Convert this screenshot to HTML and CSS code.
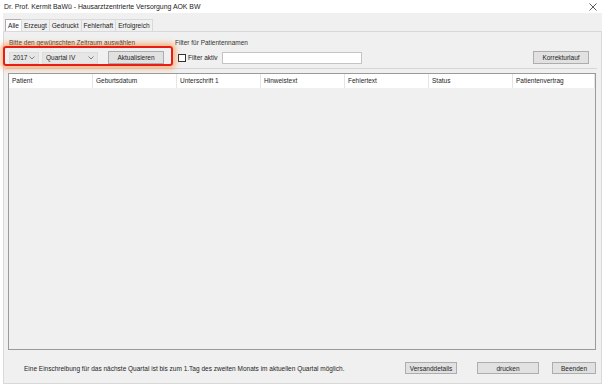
FILE: index.html
```html
<!doctype html>
<html lang="de">
<head>
	<meta charset="UTF-8">
	<title>Hausarztzentrierte Versorgung AOK BW</title>
	<link rel="stylesheet" href="styles.css">
</head>
<body>
	<div class="titlebar">
		<span>Dr. Prof. Kermit BaWü - Hausarztzentrierte Versorgung AOK BW</span>
		<svg class="close" width="8" height="8" viewBox="0 0 8 8"><path d="M0.5 0.5L7.5 7.5M7.5 0.5L0.5 7.5" stroke="#333" stroke-width="0.8"/></svg>
	</div>
	<div class="window">
		<div class="tabs">
			<span class="tab on">Alle</span>
			<span class="tab">Erzeugt</span>
			<span class="tab">Gedruckt</span>
			<span class="tab">Fehlerhaft</span>
			<span class="tab">Erfolgreich</span>
		</div>
		<div class="panel">
			<div class="filters">
				<div class="group">
					<div class="label">Bitte den gewünschten Zeitraum auswählen</div>
					<div class="row">
						<div class="combo year">2017<svg width="6" height="4" viewBox="0 0 6 4"><path d="M0.5 0.5L3 3L5.5 0.5" fill="none" stroke="#666" stroke-width="0.8"/></svg></div>
						<div class="combo quarter">Quartal IV<svg width="6" height="4" viewBox="0 0 6 4"><path d="M0.5 0.5L3 3L5.5 0.5" fill="none" stroke="#666" stroke-width="0.8"/></svg></div>
						<button class="btn refresh">Aktualisieren</button>
					</div>
				</div>
				<div class="group names">
					<div class="label">Filter für Patientennamen</div>
					<div class="row">
						<span class="check"></span>
						<span class="checklabel">Filter aktiv</span>
						<span class="input"></span>
					</div>
				</div>
				<button class="btn korr">Korrekturlauf</button>
			</div>
			<div class="sep"></div>
			<div class="grid">
				<div class="head">
					<span>Patient</span>
					<span>Geburtsdatum</span>
					<span>Unterschrift 1</span>
					<span>Hinweistext</span>
					<span>Fehlertext</span>
					<span>Status</span>
					<span>Patientenvertrag</span>
				</div>
			</div>
			<div class="footer">
				<span class="note">Eine Einschreibung für das nächste Quartal ist bis zum 1.Tag des zweiten Monats im aktuellen Quartal möglich.</span>
				<button class="btn versand">Versanddetails</button>
				<button class="btn drucken">drucken</button>
				<button class="btn beenden">Beenden</button>
			</div>
		</div>
	</div>
	<div class="highlight"></div>
</body>
</html>
```

FILE: styles.css
```css
*{margin:0;padding:0;box-sizing:border-box;}
body{
	background:#fff;
	font-family:"Liberation Sans",Arial,sans-serif;
	font-size:6.5px;
	color:#1e1e1e;
	width:608px;
	height:389px;
	overflow:hidden;
	position:relative;
}
.titlebar{
	height:13px;
	display:flex;
	align-items:center;
	padding:0 0 0 4px;
	font-size:6.9px;
	color:#222;
}
.titlebar .close{margin-left:auto;margin-right:11px;}
.window{
	margin-left:3px;
	width:599px;
	height:371px;
	background:#f0f0f0;
}
.tabs{
	height:18px;
	display:flex;
	align-items:flex-end;
	padding-left:2px;
}
.tab{
	height:12px;
	line-height:11px;
	padding:0 2px;
	border:1px solid #d9d9d9;
	border-bottom:none;
	margin-right:-1px;
	background:#f0f0f0;
	font-size:6.6px;
}
.tab.on{background:#fff;border-color:#adadad;}
.panel{
	height:353px;
	border:1px solid #d9d9d9;
	background:#f0f0f0;
	padding:7px 5px 8px 4px;
	display:flex;
	flex-direction:column;
}
.filters{
	display:flex;
	align-items:flex-end;
	height:25px;
	padding-left:1px;
}
.group .label{height:8px;line-height:8px;margin-bottom:4px;color:#333;}
.row{display:flex;align-items:center;height:13px;}
.combo{
	height:12px;
	background:#e6e6e6;
	border:1px solid #dcdcdc;
	display:flex;
	align-items:center;
	justify-content:space-between;
	padding:0 3px 0 3px;
}
.year{width:30px;margin-right:3px;}
.quarter{width:56px;margin-right:10px;}
.btn{
	height:13px;
	background:#e1e1e1;
	border:1px solid #adadad;
	font-family:inherit;
	font-size:6.5px;
	color:#1e1e1e;
}
.refresh{width:56px;}
.names{margin-left:11px;}
.check{
	width:8px;
	height:8px;
	background:#fff;
	border:1px solid #333;
	margin-left:3px;
}
.checklabel{margin-left:2px;width:34px;}
.input{
	width:140px;
	height:12px;
	background:#fff;
	border:1px solid #c4c4c4;
}
.korr{width:56px;margin-left:auto;margin-right:7px;}
.sep{
	height:1px;
	background:#d5d5d5;
	margin:4px -1px 4px -3px;
}
.grid{
	height:277px;
	border:1px solid #9a9a9a;
	background:#f0f0f0;
}
.head{
	display:grid;
	grid-template-columns:repeat(6,84px) 82px;
	height:14px;
	background:#fff;
}
.head span{
	border-right:1px solid #e5e5e5;
	padding-left:3px;
	line-height:13px;
}
.footer{
	display:flex;
	align-items:center;
	height:12px;
	margin-top:12px;
}
.note{margin-left:16px;font-size:6.5px;}
.versand{width:52px;margin-left:auto;margin-right:20px;height:12px;}
.drucken{width:62px;margin-right:13px;height:12px;}
.beenden{width:44px;margin-right:0;height:12px;}
.highlight{
	position:absolute;
	left:3px;
	top:46px;
	width:170px;
	height:20px;
	border:2px solid #e61e14;
	border-radius:3px;
	box-shadow:0 0 5px 3px rgba(255,130,40,0.5);
}
```
